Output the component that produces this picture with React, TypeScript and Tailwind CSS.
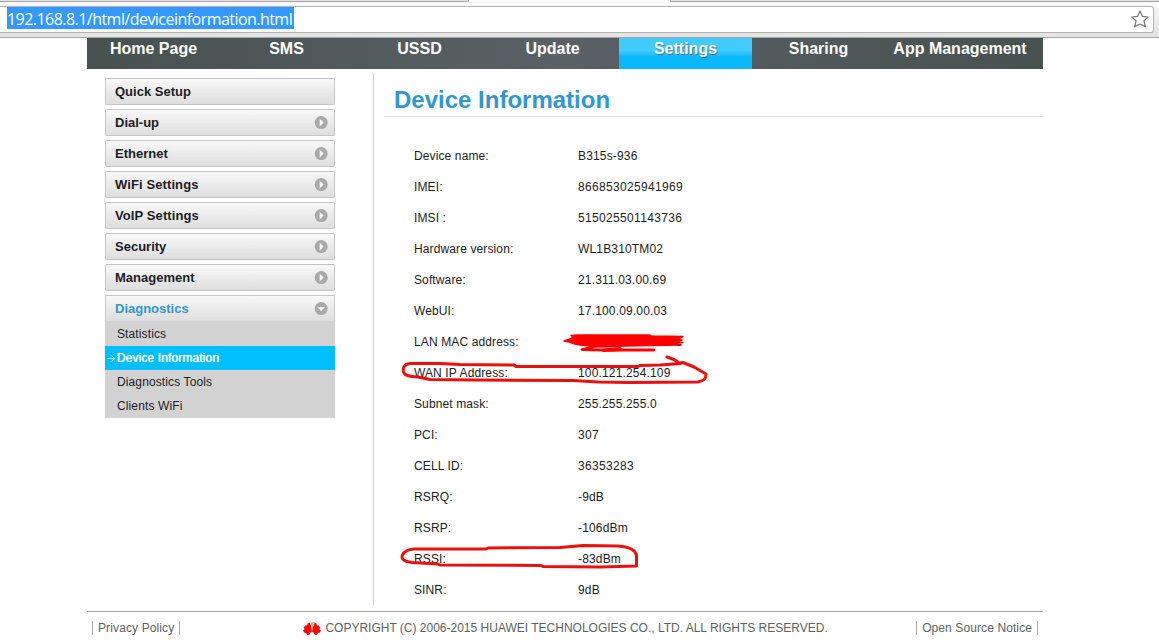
import React from 'react';
import { clsx } from 'clsx';

const navItems = ['Home Page', 'SMS', 'USSD', 'Update', 'Settings', 'Sharing', 'App Management'];

const menuItems = ['Quick Setup', 'Dial-up', 'Ethernet', 'WiFi Settings', 'VoIP Settings', 'Security', 'Management', 'Diagnostics'];

const subItems = ['Statistics', 'Device Information', 'Diagnostics Tools', 'Clients WiFi'];

const deviceInfo = [
  { label: 'Device name:', value: 'B315s-936' },
  { label: 'IMEI:', value: '866853025941969' },
  { label: 'IMSI :', value: '515025501143736' },
  { label: 'Hardware version:', value: 'WL1B310TM02' },
  { label: 'Software:', value: '21.311.03.00.69' },
  { label: 'WebUI:', value: '17.100.09.00.03' },
  { label: 'LAN MAC address:', value: '' },
  { label: 'WAN IP Address:', value: '100.121.254.109' },
  { label: 'Subnet mask:', value: '255.255.255.0' },
  { label: 'PCI:', value: '307' },
  { label: 'CELL ID:', value: '36353283' },
  { label: 'RSRQ:', value: '-9dB' },
  { label: 'RSRP:', value: '-106dBm' },
  { label: 'RSSI:', value: '-83dBm' },
  { label: 'SINR:', value: '9dB' },
];

const MenuArrow: React.FC<{ open: boolean }> = ({ open }) => (
  <svg width="14" height="14" viewBox="0 0 14 14">
    <circle cx="7.2" cy="6.6" r="6.5" fill="#a9a9a9" />
    <path d={open ? 'M3.3 5.2h7.8L7.2 9z' : 'M5.7 2.8v7.6L9.6 6.6z'} fill="#fff" />
  </svg>
);

const HuaweiLogo: React.FC = () => (
  <svg width="18" height="15" viewBox="0 0 18 15" fill="#f50a05">
    <path d="M9 10.5 8 4.5 6.6 1.6 4.6 2.4 4 4.6 2 4.6 1 6.8 1.4 8.6 0 9.4 1 11.6 3 12 4.6 14.2 6.6 13.6 7.6 11.6 9 10.5z" />
    <path d="M9 10.5 10 4.5 11.4 1.6 13.4 2.4 14 4.6 16 4.6 17 6.8 16.6 8.6 18 9.4 17 11.6 15 12 13.4 14.2 11.4 13.6 10.4 11.6 9 10.5z" />
    <path d="M9 6.5 7.6 2.2 9.4.8 12 1 11 4.6z" fill="#cdbb9a" />
  </svg>
);

const BrowserBar: React.FC = () => (
  <header className="h-[38px] bg-linear-to-b from-[#fbfbfb] to-[#e3e3e3] border-b border-[#a6a6a6]">
    <div className="flex h-[2px]">
      <div className="w-[469px] bg-[#e2e2e2] border-b border-r rounded-br-sm border-[#a3a3a3]" />
      <div className="w-[201px]" />
      <div className="flex-1 bg-[#e2e2e2] border-b border-l rounded-bl-sm border-[#a3a3a3]" />
    </div>
    <div className="pt-1">
      <div className="flex h-[27px] w-[1154px] items-start justify-between rounded-r-[3px] border border-l-0 border-[#b5b1b1] bg-white pl-[7px] pr-1">
        <span className="h-[22px] w-[287px] whitespace-nowrap bg-[#3399ff] font-['Open_Sans',sans-serif] text-base leading-[24px] tracking-[-0.54px] text-white">
          192.168.8.1/html/deviceinformation.html
        </span>
        <svg className="mt-[3px]" width="18" height="18" viewBox="0 0 18 18" fill="#fff" stroke="#777" strokeWidth="1.2" strokeLinejoin="round">
          <path d="M9 1 11.4 6.3 17.1 7 12.9 11 14.4 16.6 9 14 3.6 16.6 5.1 11 .9 7 6.6 6.3z" />
        </svg>
      </div>
    </div>
  </header>
);

// hand-drawn marks over the redacted MAC, the WAN IP and the RSSI rows
const Markup: React.FC = () => (
  <svg
    className="pointer-events-none absolute left-[395px] top-[325px]"
    width="325"
    height="255"
    viewBox="395 325 325 255"
    fill="none"
    stroke="#ec100c"
    strokeWidth="3"
    strokeLinecap="round"
    strokeLinejoin="round"
  >
    <path d="M571 335.5 578 335 650 335 651 336 683 336.5 678 339 682 340 676 342 683 342.5 670 344 681 345 650 345.5 625 346 600 347 580 345 575 344 569 342 564 341 570 339 573 337z" fill="#fe0000" stroke="#fe0000" strokeWidth="1.5" />
    <path d="M597 346 582 349.5 603 350 620 348.5M603 350.5 622 350 654 350" stroke="#fe0000" strokeWidth="2.8" />
    <path d="M678 345.5 681 344.5" stroke="#26262c" strokeWidth="1" />
    <path d="M681 363.5 660 365 640 365.5 638 366.5 516 366.5 514 365 460 364.5 440 363.5 410 363.5C404 364 402.5 368 403.5 372 405 376 410 376.5 418 377L430 379.5 475 380 573 380.5 598 382 630 382.5 698 382C704 380.5 706 379.5 706 374L694 367 683 362.5 676 363.5M667 357 674 359.5 680 363.5" />
    <path d="M414 549 486 549 488 548 560 547.5 583 545.5 618 546C631 547 636 551 636.5 556L636.5 566 600 567 543 566.5 541 565.5 440 565 438 564 412 562.5C403 561.5 401 558.5 402.5 555 404 551.5 408 549.5 414 549" />
  </svg>
);

const App: React.FC = () => {
  return (
    <div className="relative h-[643px] w-[1159px] overflow-hidden bg-white font-['Liberation_Sans',Arial,sans-serif] text-xs text-[#1c1c24]">
      <BrowserBar />

      <div className="ml-[87px] w-[956px]">
        <nav className="flex h-[31px] bg-linear-to-r from-[#475150] via-[#596166] to-[#475150]">
          {navItems.map((item) => (
            <div
              key={item}
              className={clsx(
                'h-[31px] pt-px text-center text-base font-bold leading-5 text-white',
                item === 'App Management' ? 'w-[150px]' : 'w-[133px]',
                item === 'Settings' && 'bg-linear-to-b from-[#40ccff] from-40% to-[#0ab9fb] to-60% text-shadow-[1px_1px_1px_#39738a]'
              )}
            >
              {item}
            </div>
          ))}
        </nav>

        <main className="flex h-[542px] pt-1">
          <aside className="ml-[18px] w-[230px] pt-[5px]">
            <ul className="flex flex-col gap-1 text-[13px] font-bold">
              {menuItems.map((item) => (
                <li
                  key={item}
                  className={clsx(
                    'flex h-[27px] items-center justify-between rounded-[1px] border border-[#c5c5c5] bg-linear-to-b from-[#f8f8f8] to-[#dedede] pl-[9px] pr-1.5',
                    item.endsWith('Settings') && 'tracking-[0.1px]',
                    item === 'Diagnostics' && 'border-b-[#d4d4d4] text-[#3496cd]'
                  )}
                >
                  {item}
                  {item !== 'Quick Setup' && <MenuArrow open={item === 'Diagnostics'} />}
                </li>
              ))}
            </ul>
            <ul className="bg-[#d2d2d2]">
              {subItems.map((item) => (
                <li
                  key={item}
                  className={clsx(
                    'flex h-6 items-center tracking-[0.12px]',
                    item === 'Device Information' ? 'bg-[#00bfff] pl-0.5 text-white text-shadow-[0_0_1px_#fff]' : 'pl-3'
                  )}
                >
                  {item === 'Device Information' && (
                    <svg className="mr-0.5" width="8" height="8" viewBox="0 0 8 8" fill="none" stroke="#c9f2ff" strokeWidth="1">
                      <path d="M0 4.5h7.5M4.5 1.5l3 3-3 3" />
                    </svg>
                  )}
                  {item}
                </li>
              ))}
            </ul>
          </aside>

          <section className="ml-[38px] h-[532px] flex-1 border-l border-[#cfcfcf] pl-2.5">
            <h1 className="h-11 border-b border-[#dcdcdc] pl-2.5 pt-[11px] text-2xl font-bold leading-8 text-[#3097cf]">
              Device Information
            </h1>
            <dl className="ml-[30px] pt-[23px]">
              {deviceInfo.map((row) => (
                <div key={row.label} className="flex h-[31px] items-center">
                  <dt className="w-[164px] tracking-[0.12px]">{row.label}</dt>
                  <dd className={/^\d+$/.test(row.value) ? 'tracking-[0.33px]' : 'tracking-[0.16px]'}>{row.value}</dd>
                </div>
              ))}
            </dl>
          </section>
        </main>

        <footer className="flex h-8 items-center border-t border-[#a5a5a5] px-[5px] pt-px text-[#5c6363]">
          <span className="border-x border-[#a9a9a9] px-[5px] leading-[14px] tracking-[0.12px]">Privacy Policy</span>
          <span className="ml-[123px] flex items-center gap-1 whitespace-nowrap">
            <HuaweiLogo />
            COPYRIGHT (C) 2006-2015 HUAWEI TECHNOLOGIES CO., LTD. ALL RIGHTS RESERVED.
          </span>
          <span className="ml-auto border-x border-[#a9a9a9] px-[5px] leading-[14px] tracking-[0.1px]">Open Source Notice</span>
        </footer>
      </div>

      <Markup />
    </div>
  );
};

export default App;
